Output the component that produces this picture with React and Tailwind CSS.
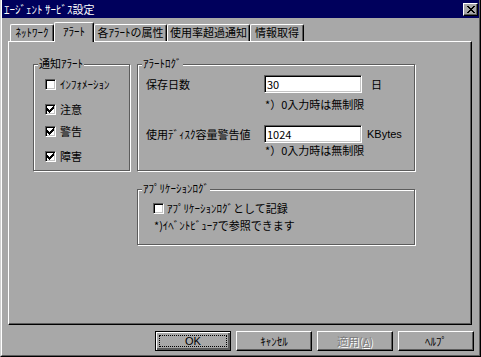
import React from "react";

function Check() {
  return (
    <svg width="7" height="7" viewBox="0 0 7 7" shapeRendering="crispEdges">
      <path
        fill="#000"
        d="M6 0h1v1h-1z M5 1h2v1h-2z M0 2h1v1h-1z M4 2h3v1h-3z M0 3h2v1h-2z M3 3h3v1h-3z M0 4h5v1h-5z M1 5h3v1h-3z M2 6h1v1h-1z"
      />
    </svg>
  );
}

function Box({ checked }) {
  return (
    <div className="w-[11px] h-[11px] shrink-0 bg-white border border-[#5c5c5c] border-r-white border-b-white shadow-[inset_1px_1px_0_#000,inset_-1px_-1px_0_#c4c4c4] flex items-center justify-center">
      {checked ? <Check /> : null}
    </div>
  );
}

function Group({ label, className, children }) {
  return (
    <div className={"relative border border-[#5c5c5c] shadow-[inset_1px_1px_0_#fff,1px_1px_0_#fff] " + className}>
      <span className="absolute left-[4px] -top-[8px] px-[1px] bg-[#a8a8a8] leading-[13px] whitespace-nowrap">{label}</span>
      {children}
    </div>
  );
}

function Input({ value }) {
  return (
    <div className="w-[98px] h-[18px] shrink-0 bg-white border border-[#5c5c5c] border-r-white border-b-white shadow-[inset_1px_1px_0_#000,inset_-1px_-1px_0_#c4c4c4] flex items-center pl-[2px] leading-[13px]">
      {value}
    </div>
  );
}

function Tab({ label, w, selected }) {
  if (selected) {
    return (
      <div className={"relative z-10 -mb-px h-[20px] bg-[#a8a8a8] border-t border-l border-white rounded-tl-[2px] rounded-tr-[2px] border-r border-r-black shadow-[inset_-1px_0_0_#5c5c5c] flex items-start justify-center pt-[2px] whitespace-nowrap " + w}>
        {label}
      </div>
    );
  }
  return (
    <div className={"h-[17px] bg-[#a8a8a8] border-t border-l border-white rounded-tl-[2px] rounded-tr-[2px] border-r border-r-black shadow-[inset_-1px_0_0_#5c5c5c] flex items-start justify-center pt-[1px] whitespace-nowrap " + w}>
      {label}
    </div>
  );
}

function Button({ children, def, disabled }) {
  if (def) {
    return (
      <div className="w-[76px] h-[20px] border border-black shadow-[inset_1px_1px_0_#fff,inset_-1px_-1px_0_#5c5c5c,inset_-2px_-2px_0_#5c5c5c] p-[3px] flex">
        <div className="flex-1 border border-dotted border-black flex items-center justify-center leading-[12px]">{children}</div>
      </div>
    );
  }
  return (
    <div
      className={
        "w-[76px] h-[20px] border border-white border-r-black border-b-black shadow-[inset_-1px_-1px_0_#5c5c5c] flex items-center justify-center " +
        (disabled ? "text-[#7c7c7c] [text-shadow:1px_1px_0_#fff]" : "")
      }
    >
      {children}
    </div>
  );
}

export default function App() {
  return (
    <div className="w-[481px] h-[357px] bg-[#a8a8a8] font-['Noto_Sans_CJK_JP',sans-serif] text-[11px] leading-[13px] text-black border-l border-l-[#cfcfcf] border-r border-r-black border-b border-b-black overflow-hidden">
      <div className="h-full border-l border-l-white border-r border-r-[#5c5c5c] border-b border-b-[#5c5c5c] flex flex-col">
        {/* title bar */}
        <div className="h-[18px] shrink-0 bg-[#00005c] flex items-center justify-between pl-[2px] pr-[1px]">
          <span className="text-white whitespace-nowrap">ｴｰｼﾞｪﾝﾄ ｻｰﾋﾞｽ設定</span>
          <div className="w-[15px] h-[13px] bg-[#a8a8a8] border border-white border-r-black border-b-black shadow-[inset_-1px_-1px_0_#5c5c5c] flex items-center justify-center">
            <svg width="8" height="7" viewBox="0 0 8 7" shapeRendering="crispEdges">
              <path
                fill="#000"
                d="M0 0h2v1h-2z M6 0h2v1h-2z M1 1h2v1h-2z M5 1h2v1h-2z M2 2h4v1h-4z M3 3h2v1h-2z M2 4h4v1h-4z M1 5h2v1h-2z M5 5h2v1h-2z M0 6h2v1h-2z M6 6h2v1h-2z"
              />
            </svg>
          </div>
        </div>

        {/* tabs */}
        <div className="mt-[4px] h-[19px] shrink-0 flex items-end pl-[8px]">
          <Tab label="ﾈｯﾄﾜｰｸ" w="w-[44px]" />
          <Tab label="ｱﾗｰﾄ" w="w-[40px]" selected />
          <Tab label="各ｱﾗｰﾄの属性" w="w-[73px]" />
          <Tab label="使用率超過通知" w="w-[83px]" />
          <Tab label="情報取得" w="w-[54px]" />
        </div>

        {/* panel */}
        <div className="ml-[6px] w-[464px] h-[284px] shrink-0 border border-white border-r-black border-b-black shadow-[inset_-1px_-1px_0_#5c5c5c] pl-[24px] pt-[22px]">
          <div className="flex items-start">
            <Group label="通知ｱﾗｰﾄ" className="w-[97px] h-[107px] shrink-0 pl-[11px]">
              <div className="flex flex-col">
                <div className="mt-[13px] h-[13px] flex items-center gap-[4px] whitespace-nowrap">
                  <Box />
                  <span>ｲﾝﾌｫﾒｰｼｮﾝ</span>
                </div>
                <div className="mt-[12px] h-[13px] flex items-center gap-[4px]">
                  <Box checked />
                  <span>注意</span>
                </div>
                <div className="mt-[9px] h-[13px] flex items-center gap-[4px]">
                  <Box checked />
                  <span>警告</span>
                </div>
                <div className="mt-[12px] h-[13px] flex items-center gap-[4px]">
                  <Box checked />
                  <span>障害</span>
                </div>
              </div>
            </Group>

            <div className="ml-[7px] flex flex-col">
              <Group label="ｱﾗｰﾄﾛｸﾞ" className="w-[278px] h-[107px]">
                <div className="mt-[10px] h-[18px] flex items-center whitespace-nowrap">
                  <span className="w-[126px] pl-[8px] shrink-0">保存日数</span>
                  <Input value="30" />
                  <span className="ml-[9px]">日</span>
                </div>
                <div className="mt-[5px] pl-[127px] whitespace-nowrap">*）0入力時は無制限</div>
                <div className="mt-[14px] h-[18px] flex items-center whitespace-nowrap">
                  <span className="w-[126px] pl-[8px] shrink-0">使用ﾃﾞｨｽｸ容量警告値</span>
                  <Input value="1024" />
                  <span className="ml-[5px] font-['Liberation_Sans',sans-serif]">KBytes</span>
                </div>
                <div className="mt-[1px] pl-[127px] whitespace-nowrap">*）0入力時は無制限</div>
              </Group>

              <Group label="ｱﾌﾟﾘｹｰｼｮﾝﾛｸﾞ" className="mt-[18px] w-[278px] h-[56px]">
                <div className="mt-[12px] pl-[15px] h-[13px] flex items-center gap-[3px] whitespace-nowrap">
                  <Box />
                  <span>ｱﾌﾟﾘｹｰｼｮﾝﾛｸﾞとして記録</span>
                </div>
                <div className="mt-[4px] pl-[16px] whitespace-nowrap">*)ｲﾍﾞﾝﾄﾋﾞｭｰｱで参照できます</div>
              </Group>
            </div>
          </div>
        </div>

        {/* buttons */}
        <div className="mt-[6px] flex justify-end gap-[5px] pr-[5px]">
          <Button def>
            <span className="font-['Liberation_Sans',sans-serif]">OK</span>
          </Button>
          <Button>ｷｬﾝｾﾙ</Button>
          <Button disabled>
            適用(<u>A</u>)
          </Button>
          <Button>ﾍﾙﾌﾟ</Button>
        </div>
      </div>
    </div>
  );
}
